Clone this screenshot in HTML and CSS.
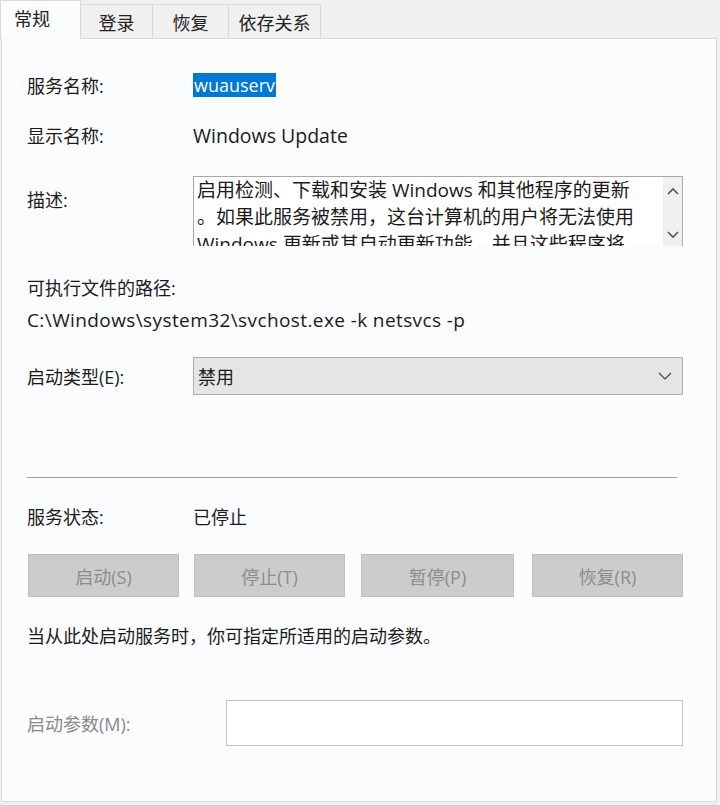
FILE: index.html
```html
<!DOCTYPE html>
<html lang="zh-CN">
<head>
    <meta charset="UTF-8">
    <meta name="viewport" content="width=device-width, initial-scale=1.0">
    <title>Windows Update 的属性</title>
    <link rel="stylesheet" href="styles.css">
</head>
<body>
    <div class="dialog">
        <!-- Tab strip -->
        <div class="tabs">
            <div class="tab active">常规</div>
            <div class="tab">登录</div>
            <div class="tab">恢复</div>
            <div class="tab">依存关系</div>
        </div>

        <div class="panel">
            <div class="row row-name">
                <span class="label">服务名称:</span>
                <span class="value"><span class="selected">wuauserv</span></span>
            </div>

            <div class="row row-display">
                <span class="label">显示名称:</span>
                <span class="value display-name">Windows Update</span>
            </div>

            <div class="row row-desc">
                <span class="label desc-label">描述:</span>
                <div class="desc-box">
                    <div class="desc-text">
                        <div>启用检测、下载和安装 Windows 和其他程序的更新</div>
                        <div>。如果此服务被禁用，这台计算机的用户将无法使用</div>
                        <div>Windows 更新或其自动更新功能，并且这些程序将</div>
                    </div>
                    <div class="scrollbar">
                        <svg width="12" height="8" viewBox="0 0 12 8"><polyline points="1,7 6,2 11,7" fill="none" stroke="#555" stroke-width="1.6"/></svg>
                        <svg width="12" height="8" viewBox="0 0 12 8"><polyline points="1,1 6,6 11,1" fill="none" stroke="#555" stroke-width="1.6"/></svg>
                    </div>
                </div>
            </div>

            <div class="path-label">可执行文件的路径:</div>
            <div class="path-value">C:\Windows\system32\svchost.exe -k netsvcs -p</div>

            <div class="row row-startup">
                <span class="label">启动类型(E):</span>
                <div class="select">
                    <span>禁用</span>
                    <svg width="14" height="8" viewBox="0 0 14 8"><polyline points="1,1 7,7 13,1" fill="none" stroke="#444" stroke-width="1.2"/></svg>
                </div>
            </div>

            <div class="separator"></div>

            <div class="row row-status">
                <span class="label">服务状态:</span>
                <span class="value">已停止</span>
            </div>

            <div class="buttons">
                <button class="btn btn-start" disabled>启动(S)</button>
                <button class="btn btn-stop" disabled>停止(T)</button>
                <button class="btn btn-pause" disabled>暂停(P)</button>
                <button class="btn btn-resume" disabled>恢复(R)</button>
            </div>

            <div class="note">当从此处启动服务时，你可指定所适用的启动参数。</div>

            <div class="row row-param">
                <span class="label muted">启动参数(M):</span>
                <div class="param-input"></div>
            </div>
        </div>
    </div>
</body>
</html>
```

FILE: styles.css
```css
/* Service properties dialog */
body {
    margin: 0;
    background-color: #f0f0f0;
    font-family: "Open Sans", "Noto Sans CJK SC", sans-serif;
    font-size: 18px;
    color: #1a1a1a;
}

.dialog {
    width: 717px;
    height: 802px;
}

.tabs {
    display: flex;
    align-items: flex-end;
    height: 38px;
}

.tab {
    height: 34px;
    display: flex;
    align-items: center;
    justify-content: center;
    white-space: nowrap;
    background-color: #f0f0f0;
    border: 1px solid #d9d9d9;
    border-bottom: none;
    border-left: none;
    color: #222;
    box-sizing: border-box;
}

.tab.active {
    height: 39px;
    width: 81px;
    justify-content: flex-start;
    padding: 0 0 4px 13px;
    background-color: #fafcfe;
    margin-bottom: -1px;
    position: relative;
    z-index: 1;
    border-left: 1px solid #d9d9d9;
}

.tab:nth-child(2) { width: 72px; }
.tab:nth-child(3) { width: 76px; }
.tab:nth-child(4) { width: 92px; }

.panel {
    height: 764px;
    background-color: #fafcfe;
    border: 1px solid #d9d9d9;
    margin-left: 1px;
    padding: 0 33px 0 25px;
    box-sizing: border-box;
}

.row {
    display: flex;
    align-items: center;
}

.label {
    width: 166px;
    flex-shrink: 0;
}

.muted {
    color: #8a8a8a;
}

.row-name {
    height: 24px;
    margin-top: 34px;
}

.selected {
    background-color: #0078d7;
    color: #fff;
    padding: 0 1px;
    line-height: 24px;
    display: inline-block;
}

.row-display {
    height: 24px;
    margin-top: 26px;
}

.display-name {
    font-size: 19.5px;
}

.row-desc {
    align-items: flex-start;
    margin-top: 29px;
}

.desc-label {
    padding-top: 10px;
}

.desc-box {
    display: flex;
    width: 490px;
    height: 70px;
    border: 1px solid #a9a9a9;
    border-bottom: none;
    box-sizing: border-box;
    background-color: #fff;
    overflow: hidden;
}

.desc-text {
    flex: 1;
    padding: 0 0 0 3px;
    font-size: 19px;
    line-height: 27px;
    white-space: nowrap;
    overflow: hidden;
}

.scrollbar {
    width: 19px;
    background-color: #f0f0f0;
    display: flex;
    flex-direction: column;
    align-items: center;
    justify-content: space-between;
    padding: 10px 0 7px;
}

.path-label {
    margin-top: 30px;
    line-height: 24px;
}

.path-value {
    margin-top: 8px;
    line-height: 24px;
    font-size: 19px;
    letter-spacing: 0.4px;
}

.row-startup {
    margin-top: 25px;
}

.select {
    width: 492px;
    height: 38px;
    background-color: #e5e5e5;
    border: 1px solid #adadad;
    box-sizing: border-box;
    display: flex;
    align-items: center;
    justify-content: space-between;
    padding: 0 10px 0 4px;
}

.separator {
    margin-top: 82px;
    height: 1px;
    width: 650px;
    background-color: #a0a0a0;
}

.row-status {
    height: 24px;
    margin-top: 26px;
}

.buttons {
    display: flex;
    margin-top: 26px;
    gap: 15px;
}

.btn {
    height: 43px;
    width: 151px;
    background-color: #cccccc;
    border: 1px solid #bfbfbf;
    color: #8c8c8c;
    font-family: inherit;
    font-size: 18px;
}

.btn-start { margin-left: 1px; }
.btn-pause { width: 153px; margin-left: 1px; }
.btn-resume { margin-left: 3px; }

.note {
    margin-top: 27px;
    line-height: 24px;
}

.row-param {
    margin-top: 52px;
}

.label.muted {
    width: 199px;
}

.param-input {
    width: 459px;
    height: 46px;
    border: 1px solid #c6c6c6;
    background-color: #fff;
    box-sizing: border-box;
}
```
